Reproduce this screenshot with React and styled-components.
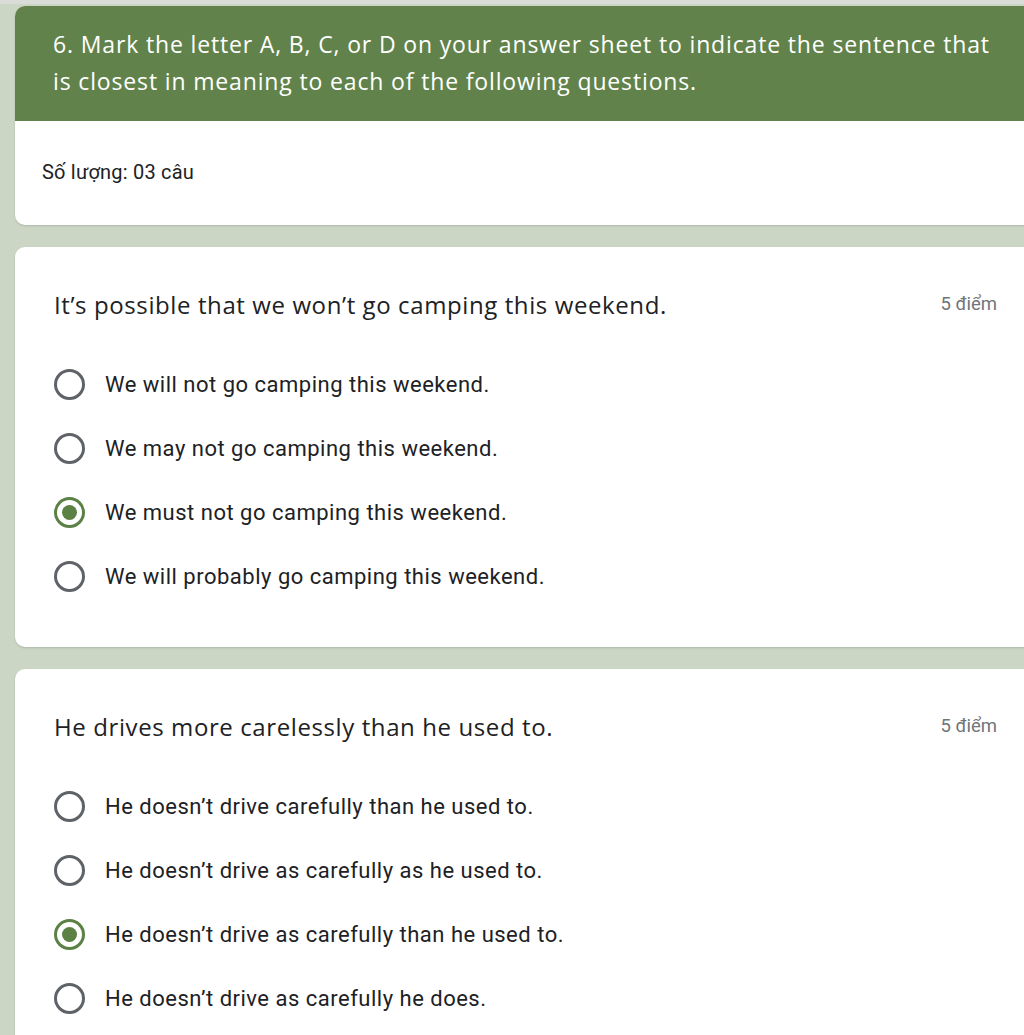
import React from "react";
import styled, { createGlobalStyle } from "styled-components";

const GlobalStyle = createGlobalStyle`
  body {
    margin: 0;
    background: #cbd6c4;
    overflow: hidden;
    font-family: Roboto, "Liberation Sans", sans-serif;
  }
`;

const Page = styled.div`
  border-top: 4px solid #dadcd8;
  padding: 2px 0 40px 15px;
`;

const Column = styled.div`
  width: 1019px;
  display: flex;
  flex-direction: column;
  gap: 22px;
`;

const Card = styled.div`
  background: #fff;
  border-radius: 10px;
  overflow: hidden;
  box-shadow: 0 1px 2px rgba(60, 64, 67, 0.2);
`;

const SectionHeader = styled.div`
  background: #61834b;
  color: #fff;
  padding: 20px 25px 21px 38px;
  font-family: "Open Sans", sans-serif;
  font-size: 23px;
  line-height: 37px;
  font-weight: 500;
  letter-spacing: 0.85px;
`;

const SectionBody = styled.div`
  padding: 38px 27px 40px;
  font-size: 20px;
  letter-spacing: 0.2px;
  line-height: 26px;
  color: #202124;
`;

const Question = styled.div`
  padding: 42px 37px 39px 39px;
`;

const TitleRow = styled.div`
  display: flex;
  justify-content: space-between;
  align-items: center;
  height: 30px;
  margin-bottom: 33px;
`;

const Title = styled.div`
  font-family: "Open Sans", sans-serif;
  font-size: 24px;
  letter-spacing: 0.6px;
  color: #202124;
`;

const Points = styled.div`
  font-size: 18.5px;
  color: #70757a;
`;

const Option = styled.label`
  display: flex;
  align-items: center;
  height: 64px;
  gap: 20px;
  font-size: 22px;
  letter-spacing: 0.5px;
  color: #202124;
`;

const Radio = styled.span`
  position: relative;
  flex: none;
  width: 31px;
  height: 31px;
  box-sizing: border-box;
  border-radius: 50%;
  border: 3px solid ${(p) => (p.checked ? "#5b8145" : "#5f6368")};
  &::after {
    content: "";
    display: ${(p) => (p.checked ? "block" : "none")};
    position: absolute;
    left: 5px;
    top: 5px;
    width: 15px;
    height: 15px;
    border-radius: 50%;
    background: #5b8145;
  }
`;

const questions = [
  {
    title: "It’s possible that we won’t go camping this weekend.",
    options: [
      "We will not go camping this weekend.",
      "We may not go camping this weekend.",
      "We must not go camping this weekend.",
      "We will probably go camping this weekend.",
    ],
    checked: 2,
  },
  {
    title: "He drives more carelessly than he used to.",
    options: [
      "He doesn’t drive carefully than he used to.",
      "He doesn’t drive as carefully as he used to.",
      "He doesn’t drive as carefully than he used to.",
      "He doesn’t drive as carefully he does.",
    ],
    checked: 2,
  },
];

export default function App() {
  return (
    <>
      <GlobalStyle />
      <Page>
        <Column>
          <Card>
            <SectionHeader>
              6. Mark the letter A, B, C, or D on your answer sheet to indicate
              the sentence that is closest in meaning to each of the following
              questions.
            </SectionHeader>
            <SectionBody>Số lượng: 03 câu</SectionBody>
          </Card>
          {questions.map((q) => (
            <Card key={q.title}>
              <Question>
                <TitleRow>
                  <Title>{q.title}</Title>
                  <Points>5 điểm</Points>
                </TitleRow>
                {q.options.map((o, i) => (
                  <Option key={o}>
                    <Radio checked={i === q.checked} />
                    {o}
                  </Option>
                ))}
              </Question>
            </Card>
          ))}
        </Column>
      </Page>
    </>
  );
}
